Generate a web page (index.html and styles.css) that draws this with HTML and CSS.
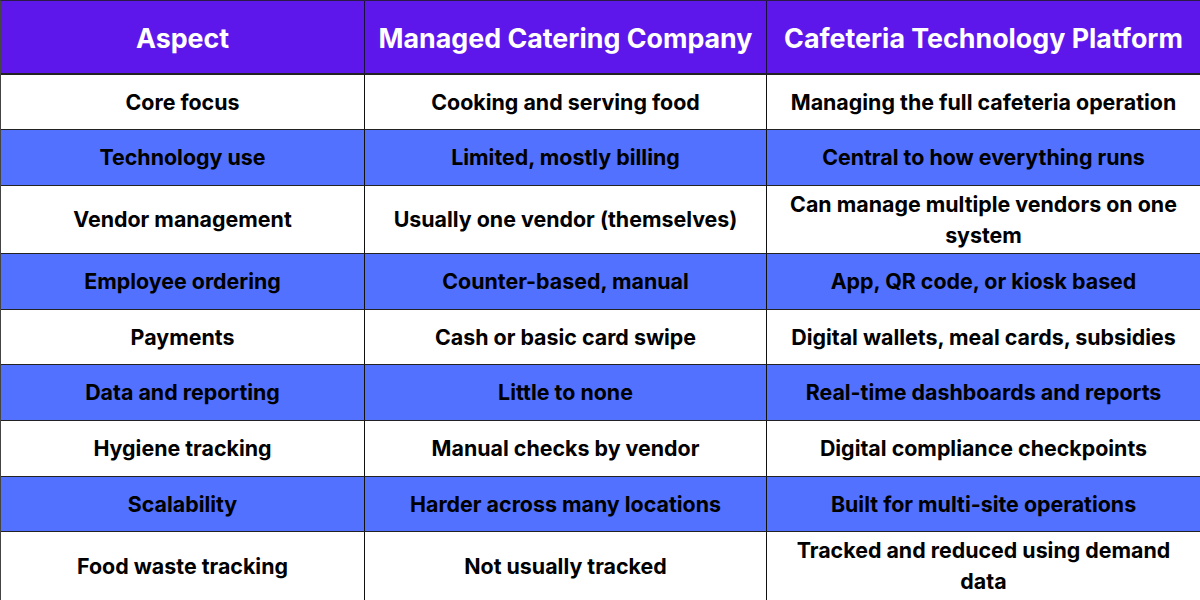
FILE: index.html
```html
<!DOCTYPE html>
<html>
<head>
<meta charset="utf-8">
<link rel="stylesheet" href="styles.css">
</head>
<body>
<div class="table">
  <div class="cell head">Aspect</div>
  <div class="cell head">Managed Catering Company</div>
  <div class="cell head">Cafeteria Technology Platform</div>

  <div class="cell w">Core focus</div>
  <div class="cell w">Cooking and serving food</div>
  <div class="cell w">Managing the full cafeteria operation</div>

  <div class="cell b">Technology use</div>
  <div class="cell b">Limited, mostly billing</div>
  <div class="cell b">Central to how everything runs</div>

  <div class="cell w">Vendor management</div>
  <div class="cell w">Usually one vendor (themselves)</div>
  <div class="cell w">Can manage multiple vendors on one system</div>

  <div class="cell b">Employee ordering</div>
  <div class="cell b">Counter-based, manual</div>
  <div class="cell b">App, QR code, or kiosk based</div>

  <div class="cell w">Payments</div>
  <div class="cell w">Cash or basic card swipe</div>
  <div class="cell w">Digital wallets, meal cards, subsidies</div>

  <div class="cell b">Data and reporting</div>
  <div class="cell b">Little to none</div>
  <div class="cell b">Real-time dashboards and reports</div>

  <div class="cell w">Hygiene tracking</div>
  <div class="cell w">Manual checks by vendor</div>
  <div class="cell w">Digital compliance checkpoints</div>

  <div class="cell b">Scalability</div>
  <div class="cell b">Harder across many locations</div>
  <div class="cell b">Built for multi-site operations</div>

  <div class="cell w last">Food waste tracking</div>
  <div class="cell w last">Not usually tracked</div>
  <div class="cell w last">Tracked and reduced using demand data</div>
</div>
</body>
</html>
```

FILE: styles.css
```css
html, body {
  margin: 0;
  padding: 0;
  background: #ffffff;
}
body {
  width: 1200px;
  height: 600px;
  overflow: hidden;
  font-family: Inter, "Liberation Sans", sans-serif;
}
.table {
  display: grid;
  grid-template-columns: 364px 402px 434px;
  grid-template-rows: 74px 55px 56px 68px 56px 55px 56px 56px 55px 69px;
  box-sizing: border-box;
  width: 1200px;
  height: 600px;
  border-top: 1px solid #2a1a4a;
  border-left: 1px solid #444;
}
.cell {
  display: flex;
  align-items: center;
  justify-content: center;
  text-align: center;
  box-sizing: border-box;
  border-right: 1px solid #111;
  border-bottom: 1px solid #222;
  padding: 0 12px;
  font-size: 21.4px;
  font-weight: 700;
  line-height: 31px;
  color: #000;
}
.head {
  background: #5e17eb;
  color: #ffffff;
  font-size: 26.8px;
  font-weight: 700;
  padding-top: 2px;
  border-bottom: 2px solid #222;
  border-right-color: #1a1040;
}
.w { background: #ffffff; }
.b { background: #5271ff; }
.last { border-bottom: 1px solid #888; }
```
